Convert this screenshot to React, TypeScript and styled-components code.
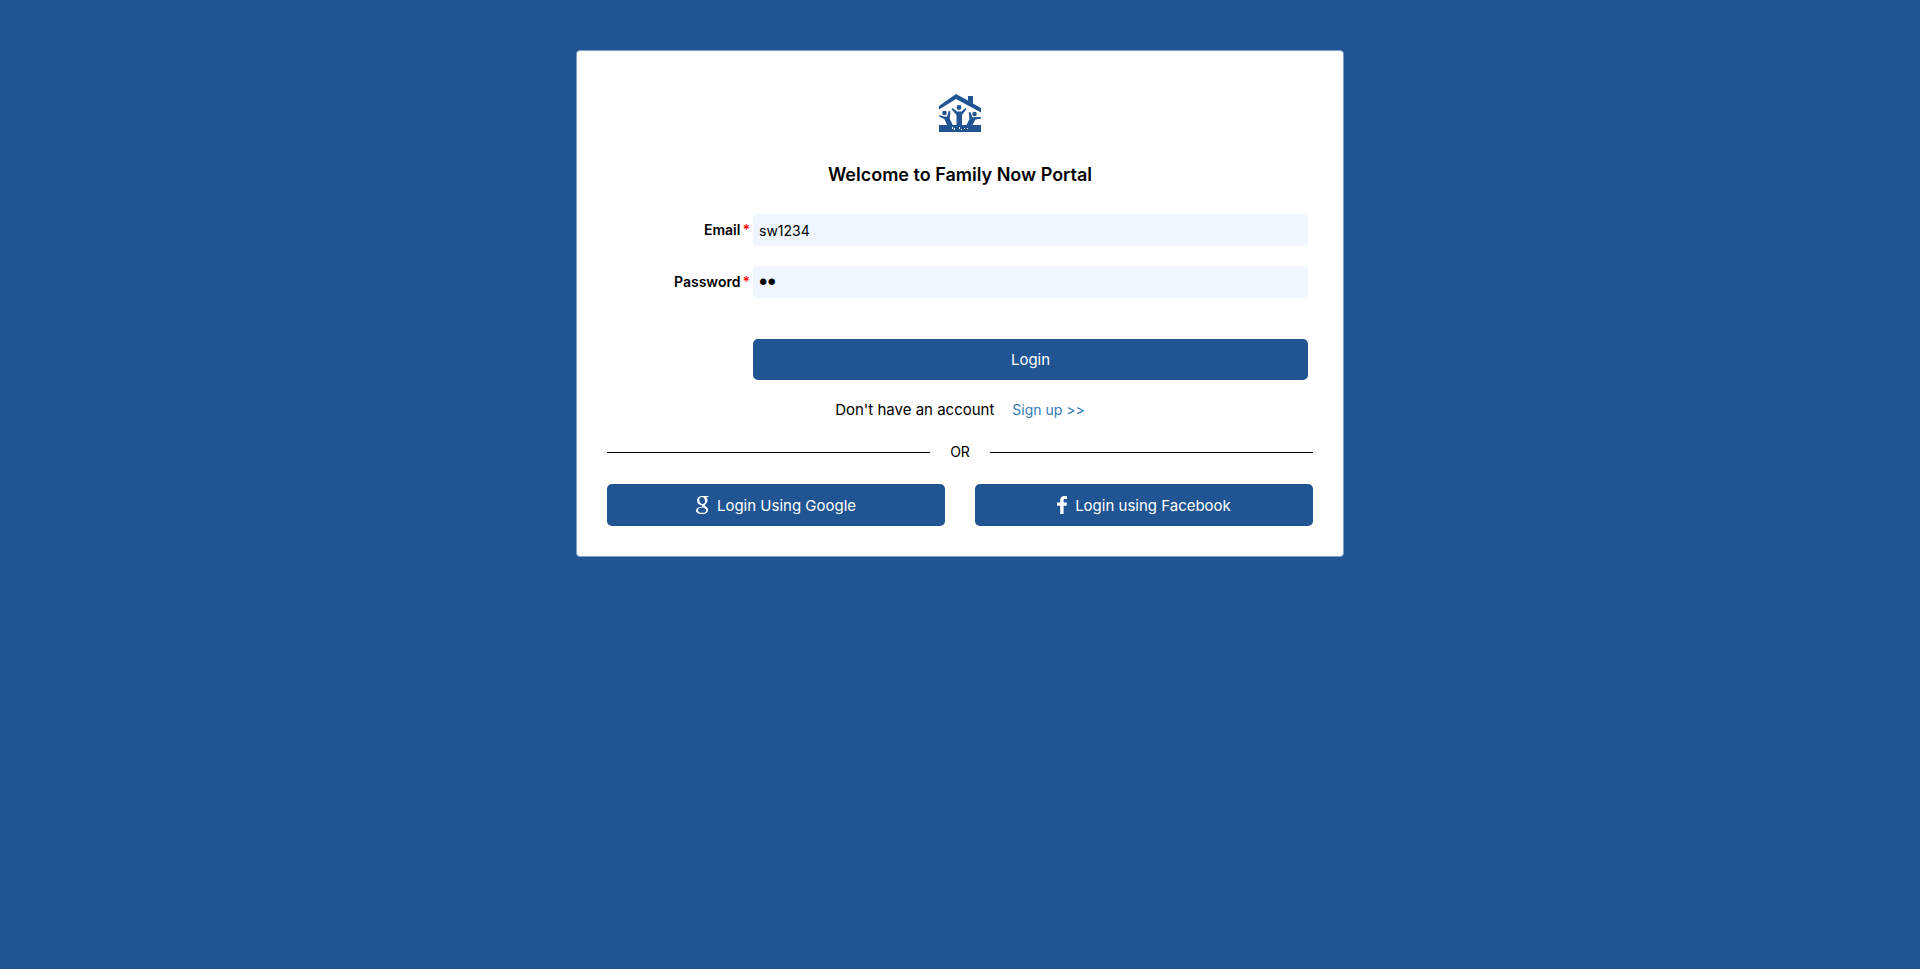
import React, { useState } from 'react';
import styled, { createGlobalStyle } from 'styled-components';

const GlobalStyle = createGlobalStyle`
  *, *::before, *::after { box-sizing: border-box; }
  body {
    margin: 0;
    background: #205493;
    color: #000;
    font-family: 'Century Gothic', Inter, 'Liberation Sans', sans-serif;
    font-size: 14px;
    line-height: 20px;
  }
`;

const Page = styled.main`
  display: flex;
  justify-content: center;
  padding: 50px 0;
`;

const Card = styled.section`
  width: 40%;
  min-width: 480px;
  padding: 43px 30px 30px;
  background: #fff;
  border: 1px solid #7f9fc9;
  border-radius: 4px;
`;

const Logo = styled.svg`
  display: block;
  width: 42px;
  height: 38px;
  margin: 0 auto;
  fill: #205493;
`;

const Title = styled.h1`
  margin: 31px 0 27px;
  font-size: 18px;
  line-height: 24px;
  font-weight: 600;
  text-align: center;
`;

const Form = styled.form`
  display: grid;
  grid-template-columns: 143fr 555fr;
  row-gap: 20px;
  column-gap: 3px;
  padding-right: 5px;
`;

const Label = styled.label`
  align-self: center;
  text-align: right;
  font-weight: 600;
`;

const Required = styled.span`
  margin-left: 2px;
  color: #f00;
`;

const Field = styled.input`
  width: 100%;
  height: 32px;
  padding: 0 6px;
  border: 0;
  border-radius: 4px;
  background: #eff6ff;
  color: #000;
  font: inherit;

  &[type='password'] {
    font-family: 'Liberation Sans', sans-serif;
    font-size: 24px;
  }
`;

const Button = styled.button`
  display: flex;
  align-items: center;
  justify-content: center;
  gap: 8px;
  width: 100%;
  height: 42px;
  border: 0;
  border-radius: 5px;
  background: #205493;
  color: #fff;
  font-family: inherit;
  font-size: 15px;
  cursor: pointer;
`;

const LoginButton = styled(Button)`
  grid-column: 2;
  height: 41px;
  margin-top: 21px;
`;

const SignUp = styled.p`
  display: flex;
  align-items: baseline;
  justify-content: center;
  gap: 18px;
  margin: 20px 0 22px;
`;

const Prompt = styled.span`
  font-size: 15px;
`;

const Link = styled.a`
  color: #337ab7;
  text-decoration: none;
`;

const Divider = styled.div`
  display: flex;
  align-items: center;
  gap: 20px;
  margin-bottom: 22px;

  &::before,
  &::after {
    content: '';
    flex: 1;
    height: 1px;
    background: #000;
  }
`;

const Providers = styled.div`
  display: grid;
  grid-template-columns: 1fr 1fr;
  gap: 30px;
`;

const Glyph = styled.svg<{ $width: number }>`
  width: ${(p) => p.$width}px;
  height: 18px;
  fill: #fff;
`;

function FamilyLogo() {
  return (
    <Logo viewBox="0 0 42 38" role="img" aria-label="Family Now">
      <path d="M0 12 17 0 29 6.500V2h5v7.500L42 14v4.500L17 5 0 15.500Z" />
      <circle cx="20" cy="13.500" r="2.400" />
      <circle cx="5.500" cy="19" r="2.300" />
      <circle cx="35.500" cy="20" r="2.300" />
      <path d="M13.500 14 18 17.500h4.500L26.500 14l1 1.200L23 21v10h-5.500V21l-5-5.800Z" />
      <path d="M.5 21 5 22.500l3 .2L9.800 17l1.600.3-.6 7.700 3 6H8L5.500 25.300.3 22.600Z" />
      <path d="M41.700 23 38 23l-4.500.3-2.200-5.300-1.600.6.8 6.400-3 6h6l3-5.500 5.700-1Z" />
      <path d="M0 31h42v7H0Z" />
      <path
        d="M13 33h1v2h-1zM15 34h1v2h-1zM20 33h1v2h-1zM22 35h1v1h-1zM25 34h1v1h-1zM28 34h1v1h-1z"
        fill="#fff"
      />
    </Logo>
  );
}

function GoogleGlyph() {
  return (
    <Glyph $width={13} viewBox="0 0 13 18" aria-hidden="true">
      <path
        fillRule="evenodd"
        d="M6 0h7l-1.500 1.300H10c1 .8 1.500 1.900 1.500 3.200 0 1.500-.7 2.400-1.600 3.200-.8.700-1.100 1-1.100 1.500s.5.900 1.200 1.400c1.400 1 2 2 2 3.300C12 16.300 9.700 18 6 18c-3.700 0-6-1.300-6-3.500 0-2.300 2.400-3.700 6.300-3.800-.4-.5-.6-1-.5-1.700-3 .1-4.700-1.900-4.700-4.300C1.100 2 3.200 0 6 0ZM5.600 1C4.200 1 3.300 2 3.300 3.700 3.300 6 4.500 8 6.500 8c1.700 0 2.600-1 2.600-2.700C9.100 3 7.700 1 5.600 1ZM6.900 11.600c-3.100 0-4.900.9-4.900 2.600 0 1.600 1.700 2.600 4.400 2.600 2.400 0 3.700-.9 3.700-2.400 0-1.200-.8-1.700-2.400-2.800Z"
      />
    </Glyph>
  );
}

function FacebookGlyph() {
  return (
    <Glyph $width={10} viewBox="0 0 10 18" aria-hidden="true">
      <path d="M10 0v3H8.200C6.900 3 6.600 3.600 6.600 4.600v1.900H10L9.600 9.700h-3V18H3.200V9.700H0V6.500h3.200V4.100C3.200 1.400 4.900 0 7.400 0Z" />
    </Glyph>
  );
}

export default function App() {
  const [email, setEmail] = useState('sw1234');
  const [password, setPassword] = useState('sw');

  return (
    <>
      <GlobalStyle />
      <Page>
        <Card>
          <FamilyLogo />
          <Title>Welcome to Family Now Portal</Title>
          <Form onSubmit={(e) => e.preventDefault()}>
            <Label htmlFor="email">
              Email<Required>*</Required>
            </Label>
            <Field id="email" type="text" value={email} onChange={(e) => setEmail(e.target.value)} />
            <Label htmlFor="password">
              Password<Required>*</Required>
            </Label>
            <Field id="password" type="password" value={password} onChange={(e) => setPassword(e.target.value)} />
            <LoginButton type="submit">Login</LoginButton>
          </Form>
          <SignUp>
            <Prompt>Don't have an account</Prompt>
            <Link href="#signup">Sign up &gt;&gt;</Link>
          </SignUp>
          <Divider>OR</Divider>
          <Providers>
            <Button type="button">
              <GoogleGlyph />
              Login Using Google
            </Button>
            <Button type="button">
              <FacebookGlyph />
              Login using Facebook
            </Button>
          </Providers>
        </Card>
      </Page>
    </>
  );
}
